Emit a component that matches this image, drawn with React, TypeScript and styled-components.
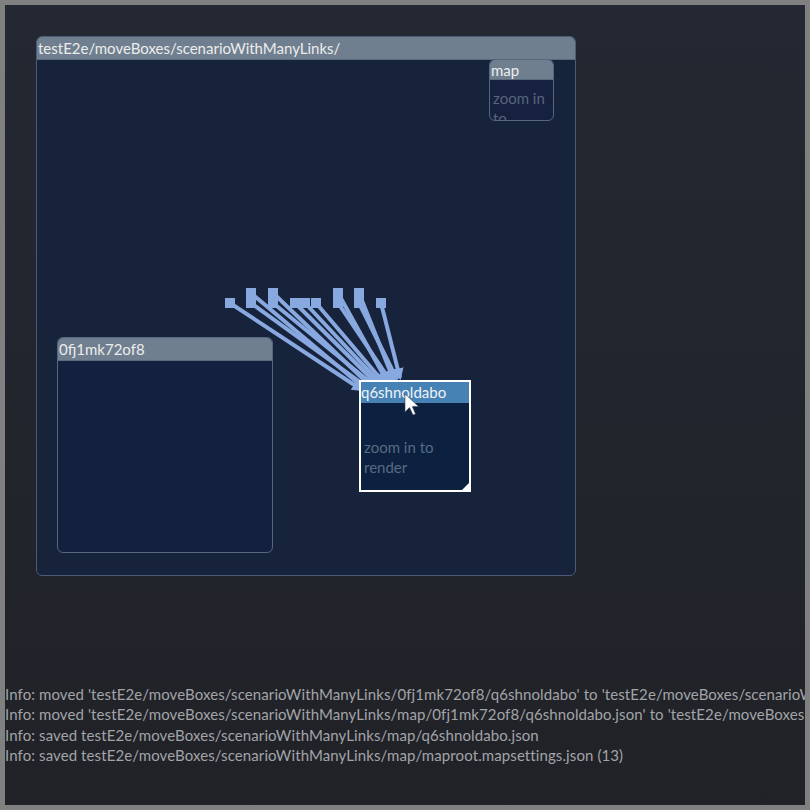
import React from 'react';
import styled, { createGlobalStyle } from 'styled-components';

const GlobalStyle = createGlobalStyle`
  html, body {
    margin: 0;
    padding: 0;
    background: #808080;
  }
  * {
    box-sizing: border-box;
  }
`;

const FONT = `Lato, 'Noto Sans', sans-serif`;

// source squares (page coords) and where each link lands
const sources: [number, number][] = [
  [230, 304],
  [251, 294],
  [251, 304],
  [273, 294],
  [273, 304],
  [295, 304],
  [305, 304],
  [316, 304],
  [338, 294],
  [338, 304],
  [359, 294],
  [359, 304],
  [381, 304],
];

// page position of the top-left of the root box body
const OX = 37;
const OY = 61;

const logLines = [
  "Info: moved 'testE2e/moveBoxes/scenarioWithManyLinks/0fj1mk72of8/q6shnoldabo' to 'testE2e/moveBoxes/scenarioWithManyLinks/q6shnoldabo'",
  "Info: moved 'testE2e/moveBoxes/scenarioWithManyLinks/map/0fj1mk72of8/q6shnoldabo.json' to 'testE2e/moveBoxes/scenarioWithManyLinks/map/q6shnoldabo.json'",
  'Info: saved testE2e/moveBoxes/scenarioWithManyLinks/map/q6shnoldabo.json',
  'Info: saved testE2e/moveBoxes/scenarioWithManyLinks/map/maproot.mapsettings.json (13)',
];

function Links() {
  const n = sources.length;
  return (
    <LinkLayer width={540} height={520}>
      <defs>
        <marker id="head" viewBox="0 0 10 10" refX="8" refY="5" markerWidth="3" markerHeight="3" orient="auto">
          <path d="M0 0 L10 5 L0 10 Z" fill="#88a8e0" />
        </marker>
      </defs>
      {sources.map(([sx, sy], i) => {
        const t = i / (n - 1);
        const tx = 362 + t * 38;
        const ty = 391 - t * 12;
        return (
          <line
            key={'l' + i}
            x1={sx - OX}
            y1={sy - OY}
            x2={tx - OX}
            y2={ty - OY}
            stroke="#88a8e0"
            strokeWidth={4}
            markerEnd="url(#head)"
          />
        );
      })}
      {sources.map(([sx, sy], i) => (
        <rect
          key={'s' + i}
          x={sx - OX - 5}
          y={sy - OY - 5}
          width={10}
          height={10}
          fill="#88a8e0"
        />
      ))}
    </LinkLayer>
  );
}

function Cursor() {
  return (
    <CursorIcon width={18} height={24} viewBox="0 0 18 24">
      <path d="M1 1 L1 19 L5.5 14.5 L9 22 L11.5 21 L8.3 13.6 L14.5 13.4 Z" fill="#ffffff" stroke="#3a4150" strokeWidth={0.6} />
    </CursorIcon>
  );
}

export default function App() {
  return (
    <>
      <GlobalStyle />
      <Screen>
        <MapPane>
          <RootBox>
            <Header>testE2e/moveBoxes/scenarioWithManyLinks/</Header>
            <Body>
              <Node style={{ left: 489 - OX, top: 60 - OY, width: 65, height: 62 }}>
                <Header $small>map</Header>
                <NodeBody>zoom in to render</NodeBody>
              </Node>
              <Node $deep style={{ left: 57 - OX, top: 338 - OY, width: 216, height: 216 }}>
                <Header>0fj1mk72of8</Header>
              </Node>
              <Links />
              <Selected style={{ left: 359 - OX, top: 381 - OY }}>
                <SelectedHeader>q6shnoldabo</SelectedHeader>
                <SelectedBody>zoom in to render</SelectedBody>
                <ResizeHandle />
              </Selected>
              <CursorSpot style={{ left: 404 - OX, top: 394 - OY }}>
                <Cursor />
              </CursorSpot>
            </Body>
          </RootBox>
        </MapPane>
        <LogPane>
          {logLines.map((l) => (
            <LogLine key={l}>{l}</LogLine>
          ))}
        </LogPane>
      </Screen>
    </>
  );
}

const Screen = styled.div`
  width: 810px;
  height: 810px;
  border: 5px solid #808080;
  display: flex;
  flex-direction: column;
  background: linear-gradient(#242832, #202227);
  overflow: hidden;
  font-family: ${FONT};
`;

const MapPane = styled.div`
  height: 676px;
  padding: 31px 0 0 31px;
`;

const RootBox = styled.div`
  width: 540px;
  height: 540px;
  border: 1px solid #4b5b78;
  border-radius: 6px;
  background: #17223b;
  display: flex;
  flex-direction: column;
  overflow: hidden;
`;

const Header = styled.div<{ $small?: boolean }>`
  height: ${(p) => (p.$small ? 20 : 23)}px;
  flex: none;
  background: #6f7f8f;
  color: #ececec;
  font-size: 15px;
  line-height: ${(p) => (p.$small ? 20 : 22)}px;
  padding-left: 1px;
  white-space: nowrap;
  overflow: hidden;
  border-bottom: 1px solid #5d6c7d;
`;

const Body = styled.div`
  position: relative;
  flex: 1;
`;

const Node = styled.div<{ $deep?: boolean }>`
  position: absolute;
  border: 1px solid #56667f;
  border-radius: 6px;
  background: ${(p) => (p.$deep ? '#13203f' : '#162140')};
  display: flex;
  flex-direction: column;
  overflow: hidden;
`;

const NodeBody = styled.div`
  padding: 8px 0 0 3px;
  color: #59647d;
  font-size: 15px;
  line-height: 20px;
`;

const LinkLayer = styled.svg`
  position: absolute;
  left: 0;
  top: 0;
  overflow: visible;
  pointer-events: none;
`;

const Selected = styled.div`
  position: absolute;
  width: 112px;
  height: 112px;
  border: 2px solid #ffffff;
  background: #0b213f;
  display: flex;
  flex-direction: column;
`;

const SelectedHeader = styled.div`
  height: 21px;
  background: #4682b4;
  color: #eef2f8;
  font-size: 15px;
  line-height: 21px;
  white-space: nowrap;
  overflow: hidden;
`;

const SelectedBody = styled.div`
  padding: 34px 0 0 3px;
  color: #596a82;
  font-size: 15px;
  line-height: 20px;
  width: 90px;
`;

const ResizeHandle = styled.div`
  position: absolute;
  right: 0;
  bottom: 0;
  width: 0;
  height: 0;
  border-left: 7px solid transparent;
  border-bottom: 7px solid #ffffff;
`;

const CursorSpot = styled.div`
  position: absolute;
  width: 18px;
  height: 24px;
`;

const CursorIcon = styled.svg`
  display: block;
`;

const LogPane = styled.div`
  flex: 1;
  padding: 3px 0 0 0;
  overflow: hidden;
`;

const LogLine = styled.div`
  color: #a3a4a8;
  font-size: 15px;
  line-height: 20.3px;
  letter-spacing: 0.1px;
  white-space: nowrap;
`;
